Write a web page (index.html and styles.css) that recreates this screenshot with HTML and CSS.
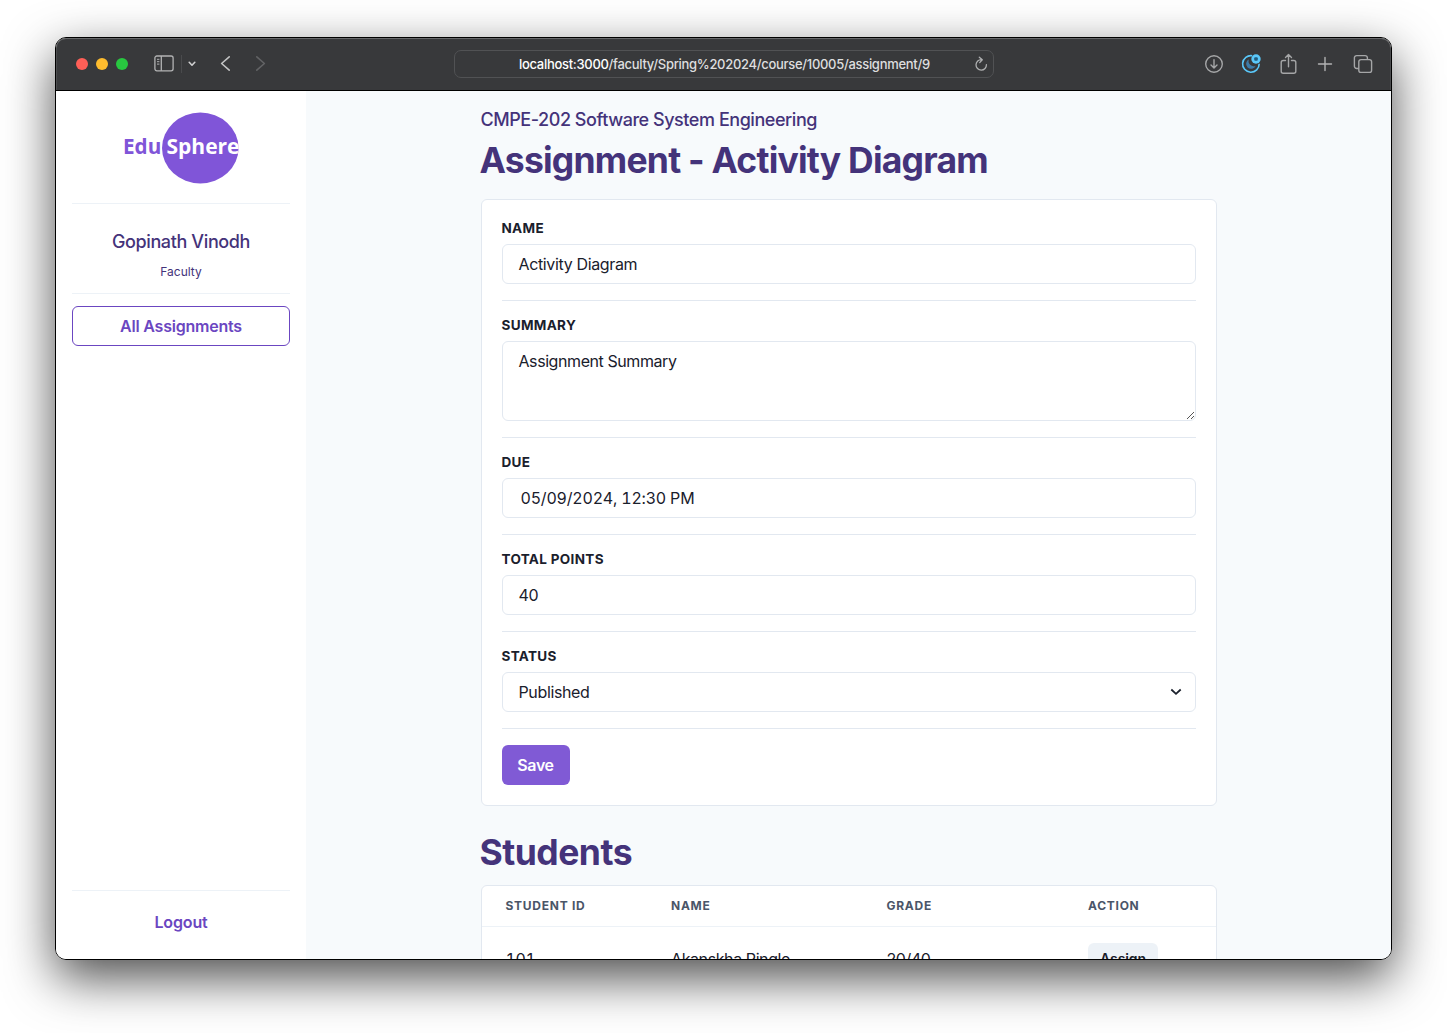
FILE: index.html
```html
<!DOCTYPE html>
<html lang="en">
<head>
<meta charset="utf-8">
<title>EduSphere – Assignment</title>
<link rel="stylesheet" href="styles.css">
</head>
<body>
<div class="window">
  <header class="toolbar">
    <div class="toolbar-left">
      <i class="light red"></i><i class="light yellow"></i><i class="light green"></i>
      <svg class="ic-sidebar" width="20" height="17" viewBox="0 0 20 17" fill="none" stroke="#b2b3b4" stroke-width="1.3"><rect x=".9" y="1" width="18.2" height="14.8" rx="2"/><path d="M7.3 1v14.8"/><path d="M3 4.3h2.4M3 6.7h2.4M3 9.1h2.4" stroke-width="1"/></svg>
      <span class="sep"></span>
      <svg class="ic-down" width="8" height="6" viewBox="0 0 8 6" fill="none" stroke="#d0d0d1" stroke-width="1.6" stroke-linecap="round" stroke-linejoin="round"><path d="M1.2 1.3 4 4.2l2.8-2.9"/></svg>
      <svg class="ic-back" width="11" height="17" viewBox="0 0 11 17" fill="none" stroke="#c2c3c3" stroke-width="1.6" stroke-linecap="round" stroke-linejoin="round"><path d="M9.2 1.8 1.6 8.500l7.600 6.700"/></svg>
      <svg class="ic-fwd" width="11" height="17" viewBox="0 0 11 17" fill="none" stroke="#626365" stroke-width="1.6" stroke-linecap="round" stroke-linejoin="round"><path d="m1.800 1.800 7.600 6.700-7.600 6.700"/></svg>
    </div>
    <div class="address">
      <span class="url"><b>localhost:3000</b>/faculty/Spring%202024/course/10005/assignment/9</span>
      <svg class="ic-reload" width="14" height="16" viewBox="0 0 14 16" fill="none" stroke="#aeafb0" stroke-width="1.3" stroke-linecap="round" stroke-linejoin="round"><path d="M7.600 3.700A5.200 5.200 0 1 0 12.400 8.600M5.300 1.200l3 2.600-2.600 2.800"/></svg>
    </div>
    <div class="toolbar-right">
      <svg width="20" height="20" viewBox="0 0 20 20" fill="none" stroke="#a5a6a7" stroke-width="1.4" stroke-linecap="round" stroke-linejoin="round"><circle cx="10" cy="10" r="8.3"/><path d="M10 5.6v8M7 10.9l3 3 3-3"/></svg>
      <svg width="20" height="20" viewBox="0 0 20 20" fill="none"><path d="M11.200 1.700A8.300 8.300 0 1 0 18.200 9.800" stroke="#5ac8fa" stroke-width="1.6"/><path d="M8 5.300a5 5 0 1 0 6.700 6.500A5 5 0 0 1 8 5.300z" fill="#3d7ba8"/><circle cx="15" cy="5" r="4.700" fill="#5ac8fa"/><rect x="13.200" y="3.200" width="3.600" height="3.600" rx="1" fill="#245b7c"/></svg>
      <svg width="20" height="22" viewBox="-.5 0 20 22" fill="none" stroke="#a5a6a7" stroke-width="1.4" stroke-linecap="round" stroke-linejoin="round"><path d="M6 7.500H3.700a2 2 0 0 0-2 2v8.800a2 2 0 0 0 2 2h10.600a2 2 0 0 0 2-2V9.500a2 2 0 0 0-2-2H12M9 13.800V1.700M6 4.500l3-3 3 3"/></svg>
      <svg width="20" height="16" viewBox="-1 0 20 16" fill="none" stroke="#b2b3b4" stroke-width="1.4" stroke-linecap="round"><path d="M8 1.500v13M1.500 8h13"/></svg>
      <svg width="20" height="20" viewBox="0 0 20 20" fill="none" stroke="#a5a6a7" stroke-width="1.4" stroke-linejoin="round"><rect x="5.800" y="5.600" width="12.800" height="12.800" rx="2.200"/><path d="M5.800 14.500H3.600a2.200 2.200 0 0 1-2.200-2.200V3.800a2.200 2.200 0 0 1 2.200-2.200h8.600a2.200 2.200 0 0 1 2.200 2.200v1.800"/></svg>
    </div>
  </header>

  <div class="app">
    <aside class="sidebar">
      <svg class="logo" width="118" height="72" viewBox="0 0 118 72">
        <ellipse cx="78.300" cy="36" rx="38.300" ry="35.500" fill="#8055d8"/>
        <text x="1" y="42.200" textLength="38.300" lengthAdjust="spacingAndGlyphs" class="logo-text" fill="#8055d8">Edu</text>
        <text x="44.500" y="42.200" textLength="73" lengthAdjust="spacingAndGlyphs" class="logo-text" fill="#fff">Sphere</text>
      </svg>
      <div class="profile">
        <div class="person"><span>Gopinath Vinodh</span></div>
        <div class="role"><span>Faculty</span></div>
      </div>
      <div class="outline-btn"><span>All Assignments</span></div>
      <div class="logout"><span>Logout</span></div>
    </aside>

    <main class="main">
      <div class="container">
        <div class="course"><span>CMPE-202 Software System Engineering</span></div>
        <h1 class="title"><span>Assignment - Activity Diagram</span></h1>
        <section class="card">
          <div class="field">
            <div class="label"><span>Name</span></div>
            <div class="control"><span>Activity Diagram</span></div>
          </div>
          <div class="field">
            <div class="label"><span>Summary</span></div>
            <div class="control area"><span>Assignment Summary</span>
              <svg class="grip" width="9" height="9" viewBox="0 0 9 9" stroke="#555" stroke-width="1"><path d="M1 8 8 1M5 8l3-3"/></svg>
            </div>
          </div>
          <div class="field">
            <div class="label"><span>Due</span></div>
            <div class="control date"><span>05/09/2024, 12:30 PM</span></div>
          </div>
          <div class="field">
            <div class="label"><span>Total Points</span></div>
            <div class="control"><span>40</span></div>
          </div>
          <div class="field">
            <div class="label"><span>Status</span></div>
            <div class="control select"><span>Published</span>
              <svg width="12" height="8" viewBox="0 0 12 8" fill="none" stroke="#1a202c" stroke-width="1.800"><path d="m1.300 1.500 4.700 4.300 4.700-4.300"/></svg>
            </div>
          </div>
          <div class="save"><span>Save</span></div>
        </section>
        <h1 class="title students"><span>Students</span></h1>
        <section class="table">
          <div class="row head"><span>Student ID</span><span>Name</span><span>Grade</span><span>Action</span></div>
          <div class="row"><span class="id">101</span><span>Akanskha Pingle</span><span>20/40</span><span class="assign">Assign</span></div>
        </section>
      </div>
    </main>
  </div>
</div>
</body>
</html>
```
FILE: styles.css
```css
* { box-sizing: border-box; }
html, body { height: 100%; }
body {
  margin: 0;
  padding: 37px 55px 0;
  background: #fff;
  overflow: hidden;
  font-family: Inter, "Liberation Sans", sans-serif;
  color: #1a202c;
}
.window {
  width: 1337px;
  height: 923px;
  display: flex;
  flex-direction: column;
  border: 1px solid #000;
  border-radius: 11px;
  overflow: hidden;
  box-shadow: 0 18px 50px rgba(0, 0, 0, .7);
}
.toolbar {
  flex: none;
  height: 53px;
  display: grid;
  grid-template-columns: 398px 540px 1fr;
  align-items: center;
  background: #38393b;
  border-bottom: 1px solid #000;
  border-radius: 10px 10px 0 0;
  box-shadow: inset 0 1px 0 #67686a, inset 1px 0 0 #4c4d4f, inset -1px 0 0 #4c4d4f;
}
svg { display: block; flex: none; }
.toolbar-left { display: flex; align-items: center; padding-left: 20px; }
.light { width: 12px; height: 12px; border-radius: 50%; margin-right: 8px; }
.red { background: #ff5f57; }
.yellow { background: #febc2e; }
.green { background: #28c840; }
.ic-sidebar { margin-left: 17.500px; }
.sep { width: 1px; height: 18px; background: #4a4b4d; margin: 0 6.500px 0 7.500px; }
.ic-down { margin-left: -.5px; }
.ic-back { margin-left: 23.500px; }
.ic-fwd { margin-left: 24.500px; }
.toolbar-left svg, .toolbar-right svg { margin-bottom: 1px; }
.address {
  height: 28px;
  display: flex;
  align-items: center;
  border: 1px solid #515254;
  border-radius: 7px;
  padding: 0 5px 0 64px;
  font-size: 13px;
  color: #dededf;
}
.url { flex: 1; white-space: nowrap; letter-spacing: -.3px; font-weight: 500; }
.url b { color: #fff; font-weight: 500; }
.toolbar-right { display: flex; align-items: center; justify-content: flex-end; gap: 17.200px; padding-right: 18px; }

.app { flex: 1; min-height: 0; display: flex; }
.sidebar {
  width: 250px;
  flex: none;
  display: flex;
  flex-direction: column;
  padding: 21px 16px 0;
  background: #fff;
  text-align: center;
}
.logo { align-self: center; }
.logo-text { font-family: "Open Sans", sans-serif; font-size: 20.500px; font-weight: 600; stroke: currentColor; stroke-width: 0; }
.profile {
  height: 91px;
  margin-top: 19px;
  padding-top: 26px;
  border-top: 1px solid #edf2f7;
  border-bottom: 1px solid #edf2f7;
  color: #44337a;
}
.logo-text { font-weight: 700; }
.person { font-size: 18px; line-height: 24px; font-weight: 500; letter-spacing: -.38px; }
.role { font-size: 12px; line-height: 16px; margin-top: 10px; }
.outline-btn {
  height: 40px;
  margin-top: 12px;
  border: 1px solid #6b46c1;
  border-radius: 6px;
  color: #6b46c1;
  font-size: 16px;
  font-weight: 600;
  line-height: 38px;
  letter-spacing: -.22px;
}
.logout {
  height: 69px;
  margin-top: auto;
  padding-top: 19px;
  border-top: 1px solid #edf2f7;
  color: #6b46c1;
  font-size: 16px;
  font-weight: 600;
  line-height: 24px;
  letter-spacing: -.15px;
}
.main { flex: 1; background: #f7fafc; overflow: hidden; }
.container { width: 736px; margin: 0 auto; padding-top: 16px; }
.course { font-size: 18px; line-height: 26px; font-weight: 500; color: #44337a; letter-spacing: -.45px; }
.title { margin: 7px 0 0 -1px; height: 59px; font-size: 35.500px; line-height: 42px; font-weight: 700; color: #44337a; white-space: nowrap; letter-spacing: -.78px; }
.students { margin-top: 26px; height: 53px; letter-spacing: -.5px; }
.card, .table { background: #fff; border: 1px solid #e2e8f0; border-radius: 6px; }
.card { padding: 20px; }
.field { border-bottom: 1px solid #e2e8f0; padding-bottom: 16px; margin-bottom: 16px; }
.label { height: 16px; font-size: 13.500px; line-height: 17px; font-weight: 700; text-transform: uppercase; letter-spacing: .33px; }
.control {
  display: flex;
  height: 40px;
  margin-top: 8px;
  padding: 0 16px;
  border: 1px solid #e2e8f0;
  border-radius: 6px;
  font-size: 16px;
  line-height: 38px;
  letter-spacing: -.36px;
}
.area { height: 80px; position: relative; letter-spacing: -.42px; }
.grip { position: absolute; right: 0; bottom: 0; }
.date { padding-left: 18px; letter-spacing: -.2px; font-variant-numeric: tabular-nums; }
.select { justify-content: space-between; align-items: center; padding-right: 13px; }
.save {
  width: 68px;
  height: 40px;
  border-radius: 6px;
  background: #805ad5;
  color: #fff;
  text-align: center;
  font-size: 16px;
  font-weight: 600;
  line-height: 40px;
  letter-spacing: -.35px;
}
.row {
  display: grid;
  grid-template-columns: 165.500px 215.500px 201.500px 1fr;
  height: 64px;
  padding: 0 24px;
  align-items: center;
  justify-items: start;
  font-size: 16px;
  letter-spacing: -.4px;
}
.id { font-variant-numeric: tabular-nums; }
.head {
  height: 41px;
  padding-bottom: 2px;
  border-bottom: 1px solid #edf2f7;
  color: #4a5568;
  font-size: 12px;
  font-weight: 700;
  letter-spacing: .73px;
  text-transform: uppercase;
}
.assign { width: 70px; height: 32px; border-radius: 6px; background: #edf2f7; text-align: center; font-size: 14px; font-weight: 600; line-height: 32px; letter-spacing: -.1px; }
```
